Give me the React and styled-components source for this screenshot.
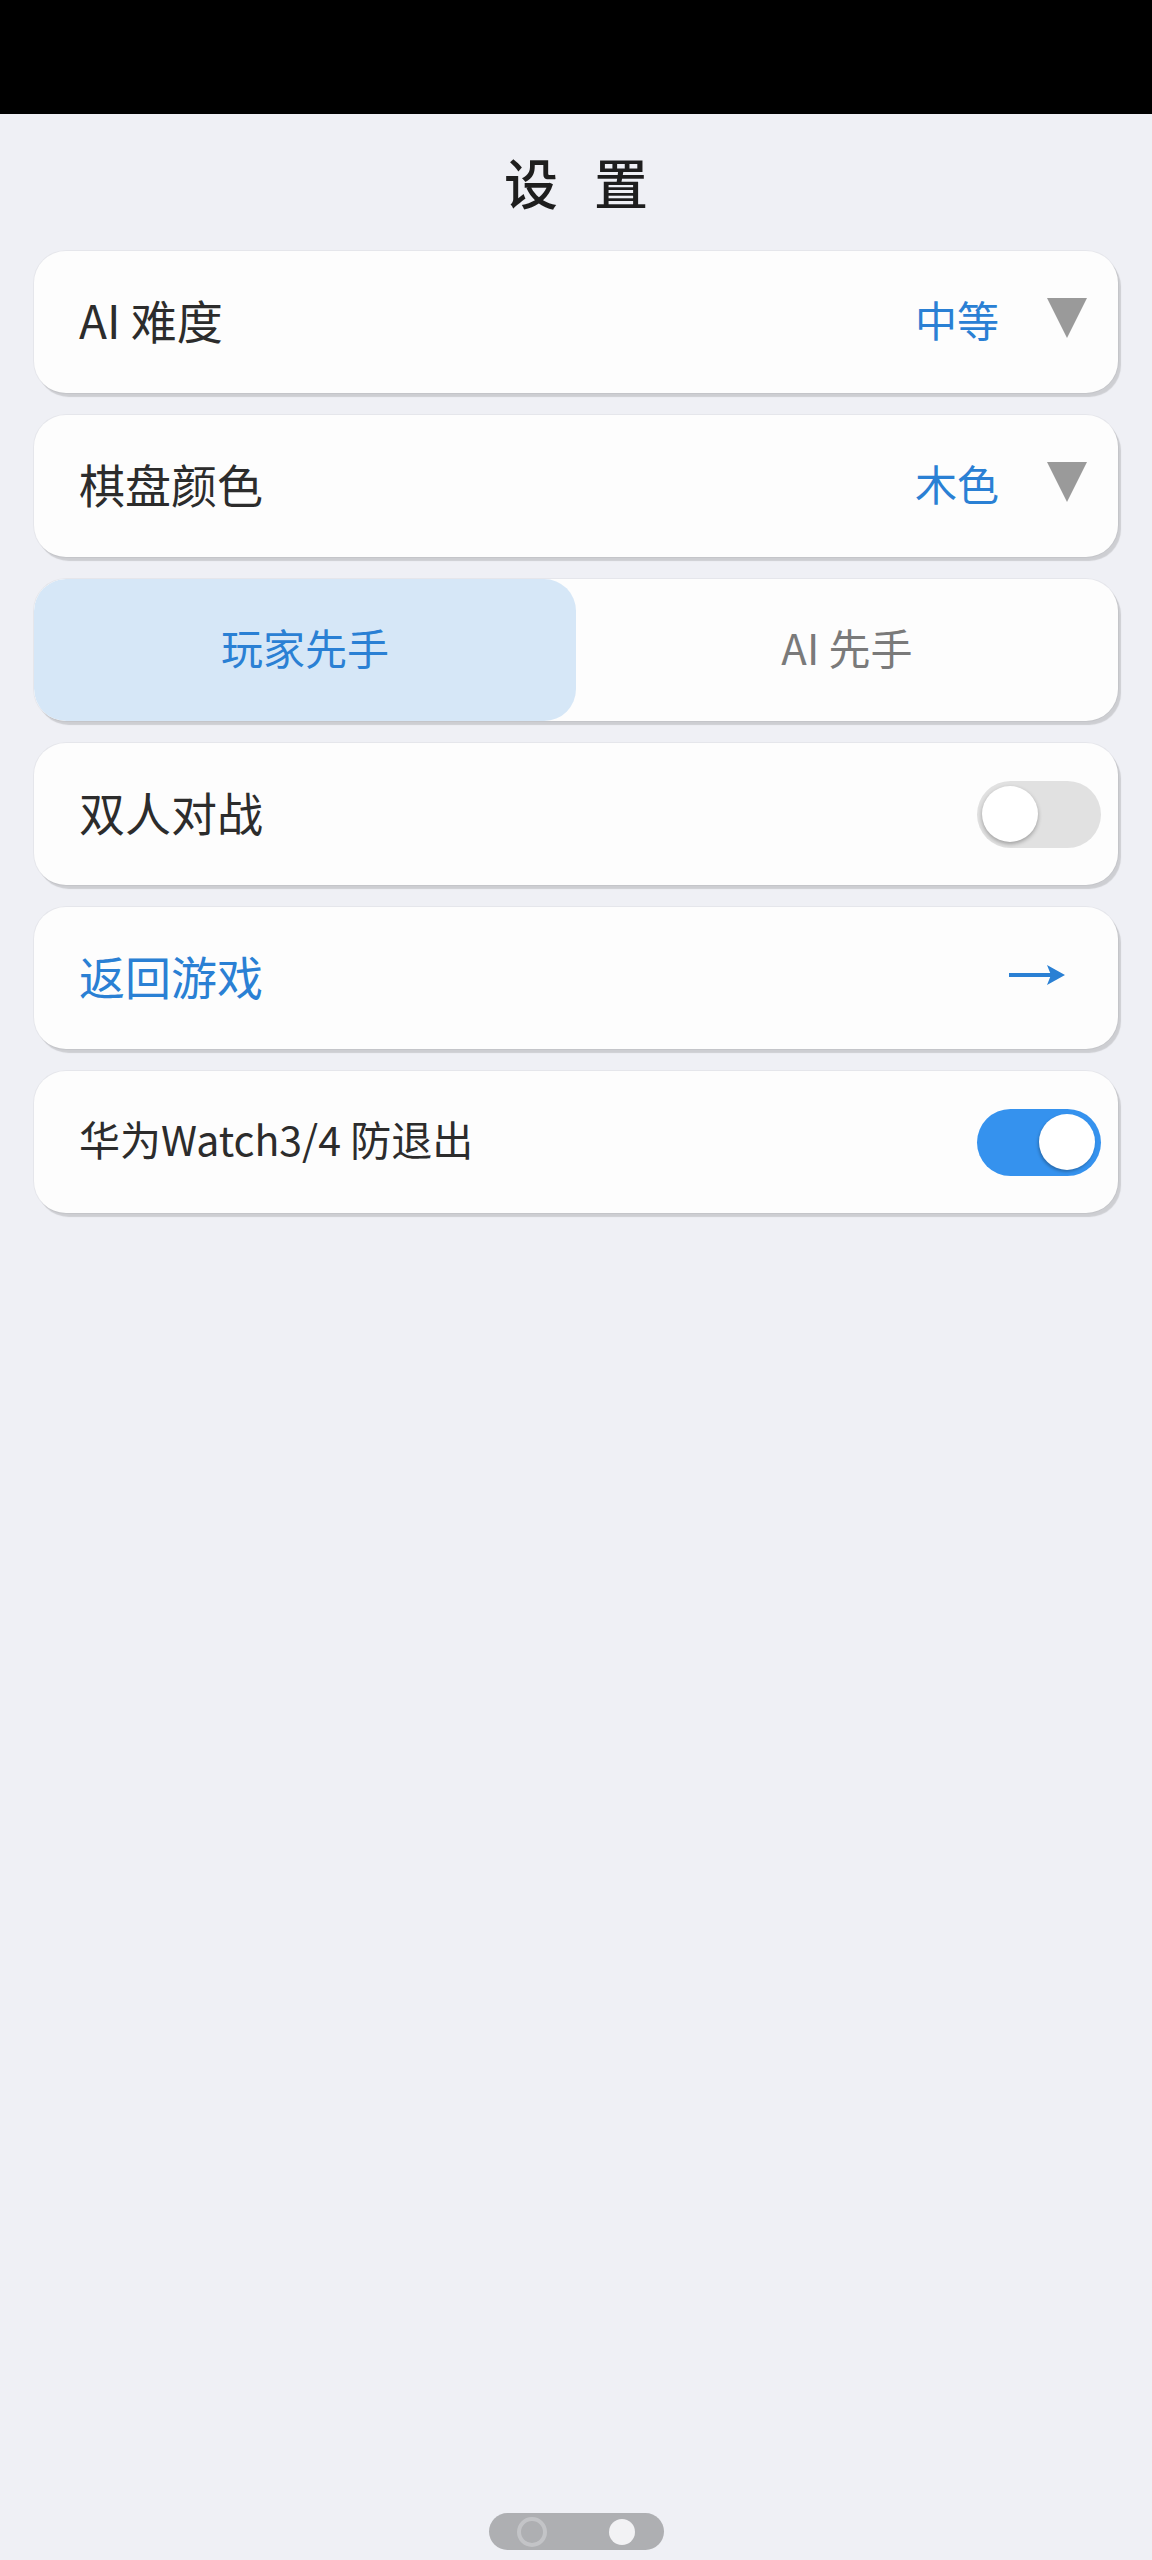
import React, { useState } from "react";
import styled, { createGlobalStyle } from "styled-components";

const GlobalStyle = createGlobalStyle`
  html, body { margin: 0; padding: 0; }
  body {
    background: #eff0f5;
    font-family: "Noto Sans CJK SC", "Noto Sans", sans-serif;
    -webkit-font-smoothing: antialiased;
  }
`;

const Page = styled.div`
  min-height: 2560px;
  display: flex;
  flex-direction: column;
  background: #eff0f5;
`;

const StatusBar = styled.div`
  height: 114px;
  background: #000;
  flex-shrink: 0;
`;

const Title = styled.h1`
  margin: 0;
  height: 137px;
  padding-bottom: 2px;
  box-sizing: border-box;
  display: flex;
  align-items: center;
  justify-content: center;
  font-size: 54px;
  font-weight: 500;
  color: #1e1e1e;
  letter-spacing: 36px;
  text-indent: 36px;
`;

const List = styled.div`
  display: flex;
  flex-direction: column;
  gap: 22px;
  padding: 0 34px;
`;

const Card = styled.div`
  height: 142px;
  box-sizing: border-box;
  border-radius: 32px;
  background: #fdfdfd;
  box-shadow: 3px 4px 1px rgba(0, 0, 0, 0.14), 0 0 0 1px rgba(0, 0, 0, 0.04);
  display: flex;
  align-items: center;
  padding: 0 17px 0 45px;
  overflow: hidden;
`;

const Label = styled.span`
  flex: 1;
  font-size: ${(p) => p.$size || 46}px;
  color: ${(p) => (p.$blue ? "#2a80d4" : "#2c2c2c")};
  line-height: 1;
  margin-top: -7px;
`;

const Value = styled.span`
  font-size: 42px;
  color: #2a80d4;
  line-height: 1;
  margin-right: 48px;
  margin-top: -6px;
`;

const Caret = styled.svg`
  width: 40px;
  height: 40px;
  margin-right: 14px;
  margin-top: -8px;
  display: block;
`;

const Arrow = styled.svg`
  width: 56px;
  height: 24px;
  margin-right: 36px;
  margin-top: -6px;
  display: block;
`;

const Track = styled.div`
  width: 124px;
  height: 67px;
  border-radius: 34px;
  background: ${(p) => (p.$on ? "#3592ee" : "#e1e1e1")};
  display: flex;
  align-items: center;
  justify-content: ${(p) => (p.$on ? "flex-end" : "flex-start")};
  padding: 0 6px 0 5px;
  box-sizing: border-box;
  cursor: pointer;
`;

const Knob = styled.div`
  width: 56px;
  height: 56px;
  border-radius: 50%;
  background: #fff;
  box-shadow: ${(p) =>
    p.$on ? "-1px 2px 3px rgba(0,0,0,0.25)" : "0 2px 4px rgba(0,0,0,0.3)"};
`;

const SegCard = styled(Card)`
  padding: 0;
`;

const Segment = styled.div`
  flex: 1;
  height: 100%;
  display: flex;
  align-items: center;
  justify-content: center;
  border-radius: 32px;
  background: ${(p) => (p.$active ? "#d6e7f7" : "transparent")};
  color: ${(p) => (p.$active ? "#2a80d4" : "#7a7a7a")};
  font-size: 42px;
  padding-bottom: 8px;
  box-sizing: border-box;
  cursor: pointer;
`;

const Spacer = styled.div`
  flex: 1;
`;

const NavPill = styled.div`
  align-self: center;
  width: 175px;
  height: 37px;
  border-radius: 19px;
  background: #aeafb2;
  margin-bottom: 10px;
  display: flex;
  align-items: center;
  justify-content: space-between;
  padding: 0 29px 0 28px;
  box-sizing: border-box;
`;

const Ring = styled.div`
  width: 30px;
  height: 30px;
  border-radius: 50%;
  border: 4px solid #c3c4c7;
  box-sizing: border-box;
`;

const Dot = styled.div`
  width: 26px;
  height: 26px;
  border-radius: 50%;
  background: #f2f2f4;
`;

function Toggle({ on, onClick }) {
  return (
    <Track $on={on} onClick={onClick}>
      <Knob $on={on} />
    </Track>
  );
}

export default function App() {
  const [first, setFirst] = useState("player");
  const [duo, setDuo] = useState(false);
  const [watch, setWatch] = useState(true);

  return (
    <Page>
      <GlobalStyle />
      <StatusBar />
      <Title>设置</Title>
      <List>
        <Card>
          <Label>AI 难度</Label>
          <Value>中等</Value>
          <Caret viewBox="0 0 40 40">
            <polygon points="0,0 40,0 20,40" fill="#9a9a9a" />
          </Caret>
        </Card>
        <Card>
          <Label>棋盘颜色</Label>
          <Value>木色</Value>
          <Caret viewBox="0 0 40 40">
            <polygon points="0,0 40,0 20,40" fill="#9a9a9a" />
          </Caret>
        </Card>
        <SegCard>
          <Segment $active={first === "player"} onClick={() => setFirst("player")}>
            玩家先手
          </Segment>
          <Segment $active={first === "ai"} onClick={() => setFirst("ai")}>
            AI 先手
          </Segment>
        </SegCard>
        <Card>
          <Label>双人对战</Label>
          <Toggle on={duo} onClick={() => setDuo(!duo)} />
        </Card>
        <Card>
          <Label $blue>返回游戏</Label>
          <Arrow viewBox="0 0 56 24">
            <line x1="0" y1="12" x2="44" y2="12" stroke="#2a80d4" strokeWidth="4" />
            <path d="M38 2 L56 12 L38 22 L42 12 Z" fill="#2a80d4" />
          </Arrow>
        </Card>
        <Card>
          <Label $size={41}>华为Watch3/4 防退出</Label>
          <Toggle on={watch} onClick={() => setWatch(!watch)} />
        </Card>
      </List>
      <Spacer />
      <NavPill>
        <Ring />
        <Dot />
      </NavPill>
    </Page>
  );
}
